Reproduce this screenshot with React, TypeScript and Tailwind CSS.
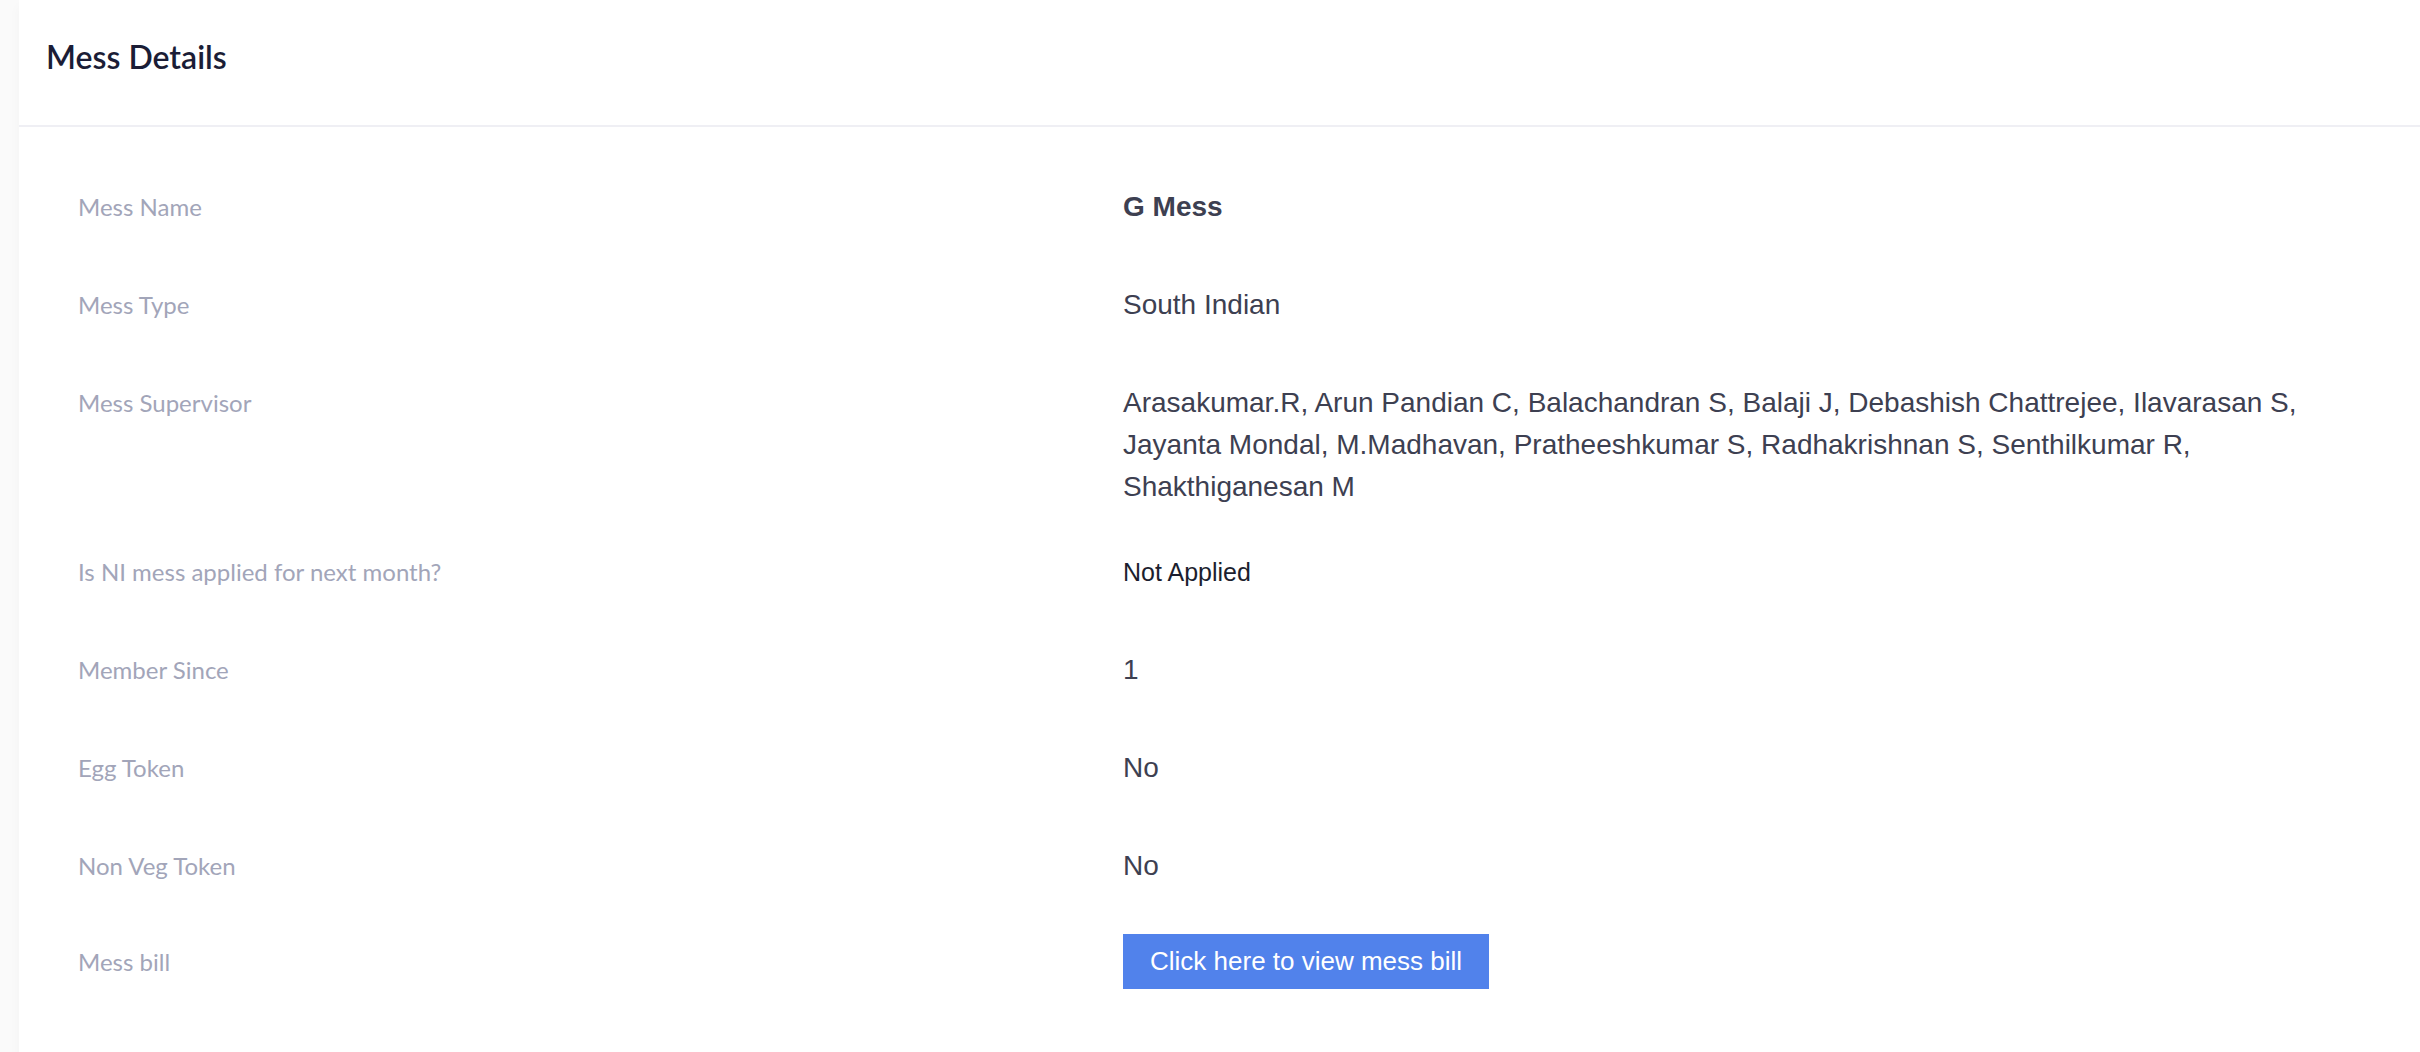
import React from "react";

interface Detail {
  label: string;
  value: React.ReactNode;
  rowClass?: string;
}

const supervisors = [
  "Arasakumar.R",
  "Arun Pandian C",
  "Balachandran S",
  "Balaji J",
  "Debashish Chattrejee",
  "Ilavarasan S",
  "Jayanta Mondal",
  "M.Madhavan",
  "Pratheeshkumar S",
  "Radhakrishnan S",
  "Senthilkumar R",
  "Shakthiganesan M",
];

const details: Detail[] = [
  { label: "Mess Name", value: <span className="font-bold">G Mess</span> },
  { label: "Mess Type", value: "South Indian" },
  { label: "Mess Supervisor", value: supervisors.join(", ") },
  {
    label: "Is NI mess applied for next month?",
    value: <span className="text-[25px] text-[#1c1e2e]">Not Applied</span>,
    rowClass: "pt-[15px] pb-[28px]",
  },
  { label: "Member Since", value: "1" },
  { label: "Egg Token", value: "No" },
  { label: "Non Veg Token", value: "No" },
  {
    label: "Mess bill",
    value: (
      <button className="bg-[#5182eb] px-[27px] h-[55px] text-[26px] leading-[55px] text-white">
        Click here to view mess bill
      </button>
    ),
    rowClass: "pt-[19px] pb-[21px] items-center",
  },
];

const App: React.FC = () => {
  return (
    <div className="min-h-screen bg-[#fafafa] pl-[19px]">
      <div className="bg-white shadow-[0_6px_12px_rgba(0,0,0,0.03)] pb-[48px]">
        <header className="h-[127px] flex items-center pl-[27px] border-b-2 border-[#efeff4]">
          <h1 className="font-['Lato',sans-serif] font-semibold text-[32px] text-[#1b1d36] -mt-[12px]">
            Mess Details
          </h1>
        </header>
        <div className="pl-[59px] pr-[60px] pt-[31px]">
          {details.map((d) => (
            <div
              key={d.label}
              className={`grid grid-cols-[1045px_1fr] ${d.rowClass ?? "py-[28px]"}`}
            >
              <div className="font-['Lato',sans-serif] text-[24px] leading-[42px] text-[#a2a5b9]">
                {d.label}
              </div>
              <div className="font-['Liberation_Sans',Arial,sans-serif] text-[28px] leading-[42px] text-[#3d4051] max-w-[1195px]">
                {d.value}
              </div>
            </div>
          ))}
        </div>
      </div>
    </div>
  );
};

export default App;
